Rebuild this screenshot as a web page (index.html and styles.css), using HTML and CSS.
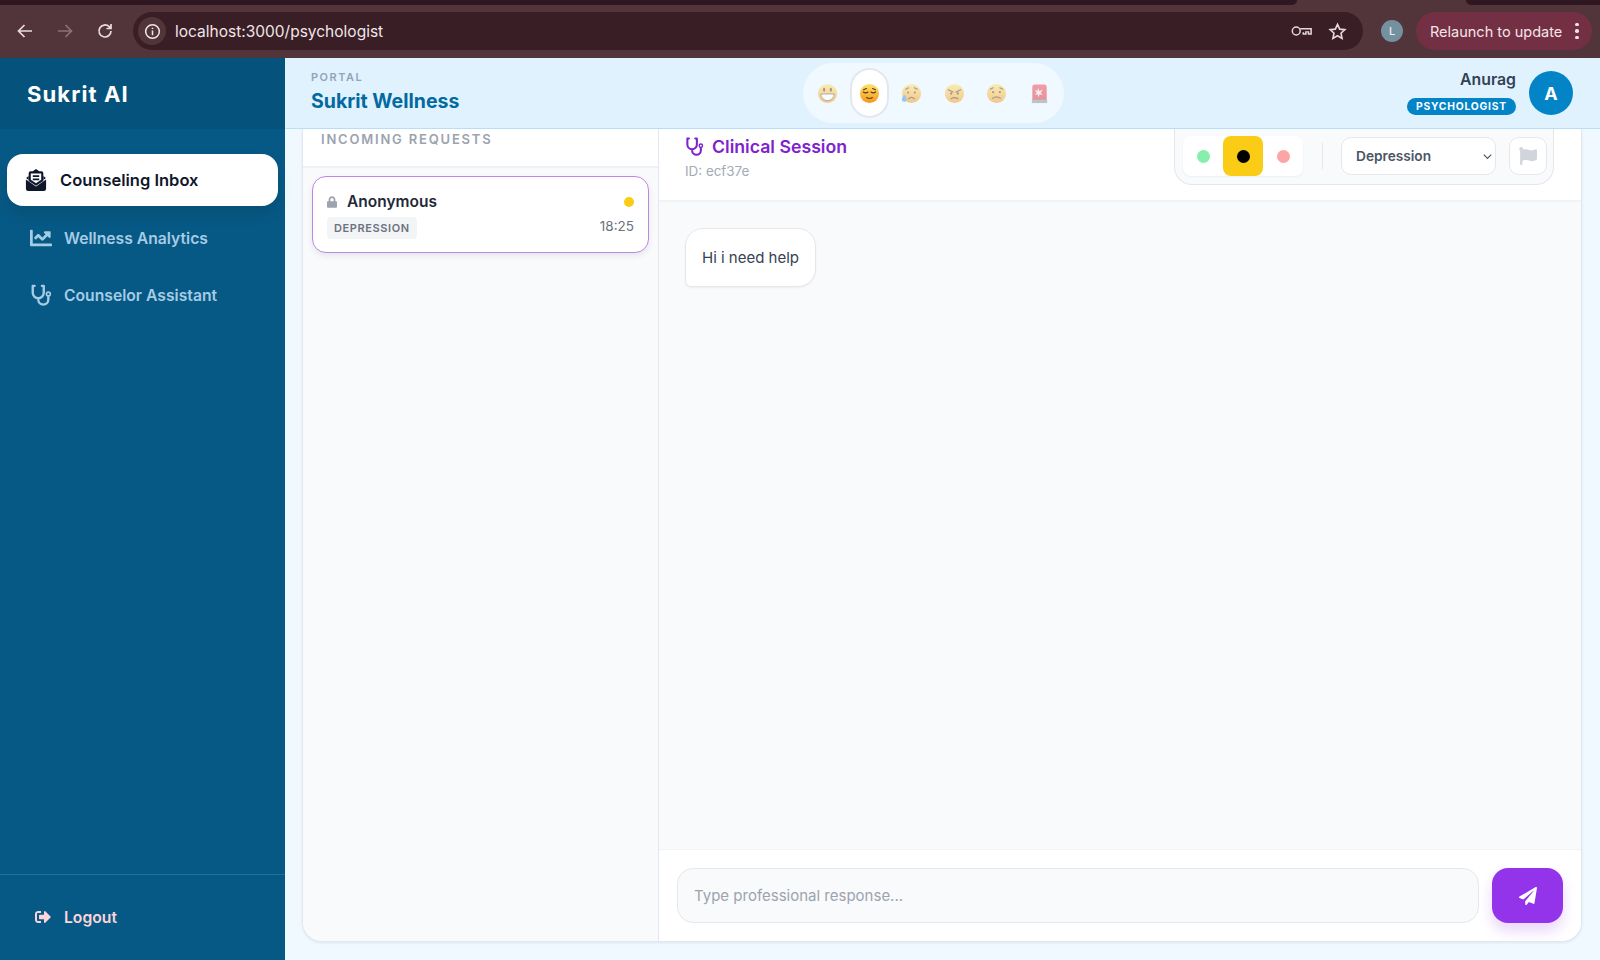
FILE: index.html
```html
<!DOCTYPE html>
<html lang="en">
<head>
    <meta charset="UTF-8">
    <title>Sukrit AI</title>
    <link rel="stylesheet" href="styles.css">
</head>
<body>
    <svg class="defs" width="0" height="0">
        <defs>
            <linearGradient id="face-fill" x1="0" y1="0" x2="0" y2="1">
                <stop offset="0" stop-color="#ffe36b"/>
                <stop offset="1" stop-color="#f59518"/>
            </linearGradient>
            <linearGradient id="alarm-fill" x1="0" y1="0" x2="0" y2="1">
                <stop offset="0" stop-color="#f2434c"/>
                <stop offset="1" stop-color="#d9303a"/>
            </linearGradient>
        </defs>
        <symbol id="i-steth" viewBox="0 0 24 24">
            <path d="M5 2H3v7.500a6 6 0 0 0 12 0V2h-2M9 15.500v1.500a5.500 5.500 0 0 0 11 0v-3.500" fill="none" stroke="currentColor" stroke-width="2.600" stroke-linecap="round" stroke-linejoin="round"/>
            <circle cx="20" cy="11" r="2.100" fill="none" stroke="currentColor" stroke-width="1.800"/>
        </symbol>
        <symbol id="i-lock" viewBox="0 0 448 512">
            <path fill="currentColor" d="M400 224h-24v-72C376 68.200 307.800 0 224 0S72 68.200 72 152v72H48c-26.500 0-48 21.500-48 48v192c0 26.500 21.500 48 48 48h352c26.500 0 48-21.500 48-48V272c0-26.500-21.500-48-48-48zm-104 0H152v-72c0-39.700 32.300-72 72-72s72 32.300 72 72v72z"/>
        </symbol>
    </svg>

    <div class="browser-bar">
        <div class="tab-strip">
            <span class="tab-left"></span>
            <span class="tab-right"></span>
        </div>
        <div class="toolbar">
            <svg class="tb-icon" viewBox="0 0 20 20"><path d="M17 10H4M9.500 4l-6 6 6 6" /></svg>
            <svg class="tb-icon dim" viewBox="0 0 20 20"><path d="M3 10h13M10.500 4l6 6-6 6" /></svg>
            <svg class="tb-icon" viewBox="0 0 20 20"><path d="M16 10a6 6 0 1 1-1.800-4.300L16 7.500M16 3v4.500h-4.500" /></svg>
            <div class="url-pill">
                <span class="site-info"><svg viewBox="0 0 20 20"><circle cx="10" cy="10" r="7.200"/><path d="M10 9v5M10 6v1.400"/></svg></span>
                <span class="url-text">localhost:3000/psychologist</span>
                <svg class="url-icon key" viewBox="0 0 24 16"><circle cx="6" cy="8" r="4.500"/><path d="M10.500 5.500h12.500v6h-3v-2.500h-3v2.500h-3v-2"/></svg>
                <svg class="url-icon star" viewBox="0 0 20 20"><path d="M10 2.500l2.300 5 5.400.6-4 3.700 1.100 5.400L10 14.500l-4.800 2.700 1.100-5.400-4-3.700 5.400-.6z"/></svg>
            </div>
            <span class="profile-dot">L</span>
            <div class="relaunch">
                <span>Relaunch to update</span>
                <span class="kebab"><i></i><i></i><i></i></span>
            </div>
        </div>
    </div>

    <div class="app">
        <aside class="sidebar">
            <div class="brand">Sukrit AI</div>
            <nav class="nav">
                <a class="nav-item active">
                    <svg class="nav-icon envelope" viewBox="0 0 24 24">
                        <path fill="currentColor" d="M1 11.500l11 7.500 11-7.500v10a2.500 2.500 0 0 1-2.500 2.500h-17A2.500 2.500 0 0 1 1 21.500z"/>
                        <path fill="currentColor" d="M4 7.500L1.200 9.800 4 12zM20 7.500l2.800 2.300L20 12z"/>
                        <path fill="currentColor" d="M12 0l3.600 2.500H18a2 2 0 0 1 2 2V13l-8 5.200L4 13V4.500a2 2 0 0 1 2-2h2.400z"/>
                        <path fill="#fff" d="M6.300 4.800h11.400v7l-5.700 3.700-5.700-3.700z"/>
                        <path fill="none" stroke="currentColor" stroke-width="1.900" d="M8.500 7.700h7M8.500 11.200h7"/>
                    </svg>
                    <span>Counseling Inbox</span>
                </a>
                <a class="nav-item">
                    <svg class="nav-icon" viewBox="0 0 512 512"><path fill="currentColor" d="M496 384H64V80c0-8.840-7.160-16-16-16H16C7.160 64 0 71.160 0 80v336c0 17.670 14.330 32 32 32h464c8.840 0 16-7.160 16-16v-32c0-8.840-7.160-16-16-16zM464 96H345.940c-21.380 0-32.090 25.850-16.970 40.970l32.400 32.400L288 242.750l-73.370-73.370c-12.500-12.500-32.760-12.500-45.250 0l-68.690 68.690c-6.250 6.250-6.250 16.380 0 22.630l22.620 22.620c6.250 6.250 16.380 6.250 22.630 0L192 237.250l73.370 73.370c12.500 12.500 32.760 12.500 45.250 0l96-96 32.400 32.400c15.120 15.120 40.970 4.410 40.970-16.970V112c.01-8.840-7.150-16-15.990-16z"/></svg>
                    <span>Wellness Analytics</span>
                </a>
                <a class="nav-item">
                    <svg class="nav-icon"><use href="#i-steth"/></svg>
                    <span>Counselor Assistant</span>
                </a>
            </nav>
            <div class="sidebar-foot">
                <a class="logout">
                    <svg class="logout-icon" viewBox="0 0 512 512"><path fill="currentColor" d="M497 273L329 441c-15 15-41 4.500-41-17v-96H152c-13.300 0-24-10.700-24-24v-96c0-13.300 10.700-24 24-24h136V88c0-21.400 25.900-32 41-17l168 168c9.300 9.400 9.300 24.600 0 34zM192 436v-40c0-6.600-5.400-12-12-12H96c-17.700 0-32-14.300-32-32V160c0-17.700 14.300-32 32-32h84c6.600 0 12-5.400 12-12V76c0-6.600-5.400-12-12-12H96c-53 0-96 43-96 96v192c0 53 43 96 96 96h84c6.600 0 12-5.400 12-12z"/></svg>
                    <span>Logout</span>
                </a>
            </div>
        </aside>

        <div class="main">
            <header class="topbar">
                <div class="portal">
                    <div class="portal-label">PORTAL</div>
                    <div class="portal-name">Sukrit Wellness</div>
                </div>

                <div class="mood-pill">
                    <button class="mood">
                        <svg viewBox="0 0 24 24"><circle class="face" cx="12" cy="12" r="10"/><ellipse cx="8.500" cy="8" rx="1.200" ry="2.100" fill="#5b3a1a"/><ellipse cx="15.500" cy="8" rx="1.200" ry="2.100" fill="#5b3a1a"/><path d="M5 12.500h14a7 7 0 0 1-14 0z" fill="#fff" stroke="#5b3a1a" stroke-width=".8"/></svg>
                    </button>
                    <button class="mood selected">
                        <svg viewBox="0 0 24 24"><circle class="face" cx="12" cy="12" r="10"/><path d="M5.500 10.500q2.500 1.800 5 0M13.500 10.500q2.500 1.800 5 0M9 16.200q3 2 6 0M5.800 8l3-1.200M18.200 8l-3-1.200" class="line"/></svg>
                    </button>
                    <button class="mood">
                        <svg viewBox="0 0 24 24"><circle class="face" cx="12" cy="12" r="10"/><circle cx="8.500" cy="11" r="1.100" fill="#5b3a1a"/><circle cx="15.500" cy="11" r="1.100" fill="#5b3a1a"/><path d="M9 17.500q3-3 6 0M6 7.500l3-1.500M18 7.500l-3-1.500" class="line"/><path d="M4.500 13q3 4 2.500 6.200a2.800 2.800 0 0 1-5 0q-.5-2.200 2.500-6.200z" fill="#3f97e8"/></svg>
                    </button>
                    <button class="mood">
                        <svg viewBox="0 0 24 24"><circle class="face" cx="12" cy="12" r="10"/><circle cx="8.500" cy="12" r="1.200" fill="#5b3a1a"/><circle cx="15.500" cy="12" r="1.200" fill="#5b3a1a"/><path d="M5.500 8l5 2.500M18.500 8l-5 2.500M8.500 17.500q3.500-2.500 7 0" class="line"/></svg>
                    </button>
                    <button class="mood">
                        <svg viewBox="0 0 24 24"><circle class="face" cx="12" cy="12" r="10"/><circle cx="8.500" cy="10.500" r="1.200" fill="#5b3a1a"/><circle cx="15.500" cy="10.500" r="1.200" fill="#5b3a1a"/><path d="M8 17q4-3 8 0M5.500 7.500l3-1.500M18.500 7.500l-3-1.500" class="line"/></svg>
                    </button>
                    <button class="mood">
                        <svg viewBox="0 0 24 24"><path d="M4.500 19V5a2.500 2.500 0 0 1 2.500-2.500h10A2.500 2.500 0 0 1 19.500 5v14z" fill="url(#alarm-fill)"/><path d="M4 18.500h16V22H4z" fill="#8d8f96"/><path d="M10.500 6l1.300 3.500 3.700-1.300-2.300 3 2.300 2.300-3.400-.6-1 3-1-3-3.100.6 2.200-2.300-2.200-3 3 1.300z" fill="#ffe3e5"/></svg>
                    </button>
                </div>

                <div class="user">
                    <div class="user-text">
                        <div class="user-name">Anurag</div>
                        <div class="role-badge">PSYCHOLOGIST</div>
                    </div>
                    <div class="avatar">A</div>
                </div>
            </header>

            <div class="content">
                <div class="panel">
                    <section class="requests">
                        <div class="requests-head">INCOMING REQUESTS</div>
                        <div class="requests-list">
                            <div class="request-card">
                                <div class="request-row">
                                    <div class="request-who">
                                        <svg class="lock"><use href="#i-lock"/></svg>
                                        <span>Anonymous</span>
                                    </div>
                                    <span class="risk-dot"></span>
                                </div>
                                <div class="request-row lower">
                                    <span class="tag">DEPRESSION</span>
                                    <span class="time">18:25</span>
                                </div>
                            </div>
                        </div>
                    </section>

                    <section class="session">
                        <div class="session-head">
                            <div class="session-title">
                                <div class="title-line">
                                    <svg class="title-icon"><use href="#i-steth"/></svg>
                                    <span>Clinical Session</span>
                                </div>
                                <div class="session-id">ID: ecf37e</div>
                            </div>
                            <div class="session-tools">
                                <div class="risk-group">
                                    <button class="risk"><i class="green"></i></button>
                                    <button class="risk on"><i class="black"></i></button>
                                    <button class="risk"><i class="red"></i></button>
                                </div>
                                <span class="tool-sep"></span>
                                <div class="category">
                                    <span>Depression</span>
                                    <svg viewBox="0 0 12 12"><path d="M2 4l4 4 4-4"/></svg>
                                </div>
                                <button class="flag-btn">
                                    <svg viewBox="0 0 512 512"><path fill="currentColor" d="M349.565 98.783C295.978 98.783 251.721 64 184.348 64c-24.955 0-47.309 4.384-68.045 12.013a55.947 55.947 0 0 0 3.586-23.562C118.117 24.015 94.806 1.206 66.338.048 34.345-1.254 8 24.296 8 56c0 19.026 9.497 35.825 24 45.945V488c0 13.255 10.745 24 24 24h16c13.255 0 24-10.745 24-24v-94.400c28.311-12.064 63.582-22.122 114.435-22.122 53.588 0 97.844 34.783 165.217 34.783 48.169 0 86.667-16.294 122.505-40.858C506.840 359.452 512 349.571 512 339.045v-243.100c0-23.393-24.269-38.870-45.485-29.016-34.338 15.948-76.454 31.854-116.950 31.854z"/></svg>
                                </button>
                            </div>
                        </div>

                        <div class="messages">
                            <div class="bubble">Hi i need help</div>
                        </div>

                        <div class="composer">
                            <div class="composer-input">Type professional response...</div>
                            <button class="send">
                                <svg viewBox="0 0 512 512"><path fill="currentColor" d="M476 3.200L12.500 270.600c-18.100 10.400-15.800 35.600 2.200 43.200L121 358.400l287.300-253.200c5.500-4.900 13.300 2.600 8.600 8.300L176 407v80.500c0 23.600 28.500 32.900 42.500 15.800L282 426l124.600 52.200c14.200 6 30.400-2.900 33-18.200l72-432C515 7.800 493.300-6.800 476 3.200z"/></svg>
                            </button>
                        </div>
                    </section>
                </div>
            </div>
        </div>
    </div>
</body>
</html>
```

FILE: styles.css
```css
* {
    margin: 0;
    padding: 0;
    box-sizing: border-box;
}

html, body {
    height: 100%;
    overflow: hidden;
}

body {
    font-family: 'Inter', 'Liberation Sans', sans-serif;
    background: #f0f9ff;
    display: flex;
    flex-direction: column;
}

button {
    border: none;
    background: none;
    font-family: inherit;
}

.defs {
    position: absolute;
}

/* browser chrome */
.browser-bar {
    height: 58px;
    flex-shrink: 0;
    background: #52343b;
    display: flex;
    flex-direction: column;
}

.tab-strip {
    height: 5px;
    display: flex;
    justify-content: space-between;
}

.tab-left,
.tab-right {
    background: #2e1720;
}

.tab-left {
    width: 1297px;
    border-radius: 0 0 8px 0;
}

.tab-right {
    width: 134px;
    border-radius: 0 0 0 8px;
}

.toolbar {
    flex: 1;
    display: flex;
    align-items: center;
    padding: 0 7px 1px 15px;
}

.tb-icon {
    width: 20px;
    height: 20px;
    margin-right: 20px;
    fill: none;
    stroke: #e9dcdf;
    stroke-width: 1.700;
}

.tb-icon.dim {
    stroke: #8c7277;
}

.url-pill {
    height: 38px;
    width: 1230px;
    margin-left: -2px;
    background: #3a1e25;
    border-radius: 19px;
    display: flex;
    align-items: center;
    padding: 0 16px 0 5px;
    color: #f0e6e8;
}

.site-info {
    width: 28px;
    height: 28px;
    border-radius: 50%;
    background: #52343b;
    display: flex;
    align-items: center;
    justify-content: center;
}

.site-info svg {
    width: 19px;
    height: 19px;
    fill: none;
    stroke: #f0e6e8;
    stroke-width: 1.600;
}

.url-text {
    font-size: 15.500px;
    margin-left: 9px;
    flex: 1;
}

.url-icon {
    fill: none;
    stroke: #e6d8db;
    stroke-width: 1.700;
}

.url-icon.key {
    width: 21px;
    height: 14px;
    margin-right: 16px;
}

.url-icon.star {
    width: 19px;
    height: 19px;
}

.profile-dot {
    width: 22px;
    height: 22px;
    margin-left: 18px;
    border-radius: 50%;
    background: #75909f;
    color: #e8eef2;
    font-size: 11px;
    font-weight: 500;
    display: flex;
    align-items: center;
    justify-content: center;
}

.relaunch {
    width: 176px;
    height: 38px;
    margin-left: 13px;
    padding-left: 14px;
    background: #733044;
    border-radius: 19px;
    color: #f6e4e8;
    font-size: 14.500px;
    display: flex;
    align-items: center;
    justify-content: space-between;
}

.kebab {
    width: 14px;
    margin-right: 8px;
    display: flex;
    flex-direction: column;
    align-items: center;
    gap: 3px;
}

.kebab i {
    width: 3.500px;
    height: 3.500px;
    border-radius: 50%;
    background: #f6e4e8;
}

/* app */
.app {
    flex: 1;
    display: flex;
    min-height: 0;
}

.sidebar {
    width: 285px;
    flex-shrink: 0;
    background: #075985;
    display: flex;
    flex-direction: column;
}

.brand {
    height: 71px;
    padding-left: 27px;
    background: #05527c;
    color: #fff;
    font-size: 22px;
    font-weight: 700;
    letter-spacing: 1.100px;
    display: flex;
    align-items: center;
}

.nav {
    flex: 1;
    padding: 25px 7px 0;
    display: flex;
    flex-direction: column;
    gap: 6px;
}

.nav-item {
    height: 52px;
    padding-left: 23px;
    border-radius: 16px;
    color: #a5cce4;
    font-size: 15.700px;
    font-weight: 600;
    display: flex;
    align-items: center;
}

.nav-item + .nav-item + .nav-item {
    margin-top: -1px;
}

.nav-item.active {
    background: #fff;
    color: #0f172a;
    font-size: 16.500px;
    padding-left: 18px;
    box-shadow: 0 8px 14px rgba(0, 0, 0, 0.1);
}

.nav-icon {
    width: 22px;
    height: 22px;
    margin-right: 12px;
}

.nav-item.active .nav-icon {
    margin-right: 13px;
}

.sidebar-foot {
    height: 86px;
    border-top: 1px solid #20709a;
    padding: 24px 0 0 35px;
}

.logout {
    height: 36px;
    color: #fbd5d9;
    font-size: 15.700px;
    font-weight: 600;
    display: flex;
    align-items: center;
}

.logout-icon {
    width: 16px;
    height: 16px;
    margin-right: 13px;
}

.main {
    flex: 1;
    min-width: 0;
    display: flex;
    flex-direction: column;
}

.topbar {
    height: 71px;
    flex-shrink: 0;
    background: #e0f2fe;
    border-bottom: 1px solid #bae0f7;
    display: flex;
    justify-content: space-between;
    align-items: center;
    padding: 0 27px 0 26px;
}

.portal {
    margin-top: -3px;
}

.portal-label {
    color: #94a3b8;
    font-size: 11px;
    font-weight: 600;
    letter-spacing: 1.500px;
    margin-bottom: 5px;
}

.portal-name {
    color: #0369a1;
    font-size: 19.500px;
    font-weight: 700;
}

.mood-pill {
    height: 60px;
    padding: 5px;
    background: rgba(255, 255, 255, 0.5);
    border-radius: 30px;
    display: flex;
    gap: 3.400px;
}

.mood {
    width: 39px;
    height: 50px;
    border-radius: 20px;
    border: 2px solid transparent;
    opacity: 0.5;
    display: flex;
    align-items: center;
    justify-content: center;
}

.mood svg {
    width: 23px;
    height: 23px;
    flex-shrink: 0;
}

.mood.selected {
    opacity: 1;
    background: #fff;
    border-color: #e2e8f0;
}

.face {
    fill: url(#face-fill);
}

.line {
    fill: none;
    stroke: #5b3a1a;
    stroke-width: 1.200;
    stroke-linecap: round;
}

.user {
    display: flex;
    align-items: center;
    gap: 13px;
}

.user-text {
    display: flex;
    flex-direction: column;
    align-items: flex-end;
    gap: 9px;
}

.user-name {
    color: #334155;
    font-size: 15.800px;
    font-weight: 600;
    line-height: 18px;
}

.role-badge {
    height: 17px;
    padding: 0 9px;
    border-radius: 9px;
    background: #0284c7;
    color: #fff;
    font-size: 10.300px;
    font-weight: 700;
    letter-spacing: 0.8px;
    line-height: 17px;
}

.avatar {
    width: 44px;
    height: 44px;
    border-radius: 50%;
    background: #0284c7;
    color: #fff;
    font-size: 18px;
    font-weight: 700;
    display: flex;
    align-items: center;
    justify-content: center;
}

.content {
    flex: 1;
    min-height: 0;
    padding: 0 18px 18px 17px;
}

.panel {
    height: 100%;
    background: #fff;
    border: 1px solid #e2e8f0;
    border-top: none;
    border-radius: 0 0 20px 20px;
    box-shadow: 0 1px 3px rgba(0, 0, 0, 0.08);
    overflow: hidden;
    display: flex;
}

.requests {
    width: 356px;
    flex-shrink: 0;
    border-right: 1px solid #e2e8f0;
    background: #f8fafc;
    display: flex;
    flex-direction: column;
}

.requests-head {
    height: 39px;
    padding: 2px 0 0 18px;
    background: #fff;
    border-bottom: 2px solid #eef1f5;
    color: #9ca3af;
    font-size: 13px;
    font-weight: 600;
    letter-spacing: 1.800px;
}

.requests-list {
    padding: 8px 9px;
}

.request-card {
    height: 77px;
    padding: 15px 14px 0;
    background: #fff;
    border: 1px solid #c084e8;
    border-radius: 14px;
    box-shadow: 0 3px 6px rgba(0, 0, 0, 0.08);
}

.request-row {
    display: flex;
    justify-content: space-between;
    align-items: center;
}

.request-row.lower {
    margin-top: 6px;
}

.request-who {
    display: flex;
    align-items: center;
    gap: 10px;
    color: #1f2937;
    font-size: 15.500px;
    font-weight: 600;
}

.lock {
    width: 10px;
    height: 12px;
    color: #9ca3af;
}

.risk-dot {
    width: 10px;
    height: 10px;
    border-radius: 50%;
    background: #facc15;
}

.tag {
    padding: 0 7px;
    height: 22px;
    line-height: 22px;
    border-radius: 4px;
    background: #f3f4f6;
    color: #6b7280;
    font-size: 11px;
    font-weight: 600;
    letter-spacing: 0.6px;
}

.time {
    color: #6b7280;
    font-size: 13.500px;
    margin-top: -4px;
}

.session {
    flex: 1;
    min-width: 0;
    display: flex;
    flex-direction: column;
}

.session-head {
    height: 73px;
    flex-shrink: 0;
    padding: 0 27px 0 26px;
    border-bottom: 2px solid #f1f3f6;
    display: flex;
    justify-content: space-between;
    align-items: flex-start;
}

.session-title {
    padding-top: 7px;
}

.title-line {
    display: flex;
    align-items: center;
    gap: 8px;
    color: #7e22ce;
    font-size: 17.700px;
    font-weight: 600;
}

.title-icon {
    width: 19px;
    height: 19px;
}

.session-id {
    margin-top: 6px;
    color: #a3aab5;
    font-size: 13.400px;
}

.session-tools {
    height: 56px;
    padding: 7px 6px 8px 8px;
    background: #f8fafc;
    border: 1px solid #e5e7eb;
    border-top: none;
    border-radius: 0 0 18px 18px;
    display: flex;
    align-items: center;
}

.risk-group {
    height: 40px;
    background: #fff;
    border-radius: 8px;
    box-shadow: 0 1px 2px rgba(0, 0, 0, 0.05);
    display: flex;
}

.risk {
    width: 40px;
    height: 40px;
    border-radius: 8px;
    display: flex;
    align-items: center;
    justify-content: center;
}

.risk.on {
    background: #facc15;
}

.risk i {
    width: 13px;
    height: 13px;
    border-radius: 50%;
}

.risk .green { background: #86efac; }
.risk .black { background: #000; }
.risk .red { background: #fca5a5; }

.tool-sep {
    width: 1px;
    height: 26px;
    margin: 0 18px 0 19px;
    background: #e2e8f0;
}

.category {
    width: 155px;
    height: 38px;
    padding: 0 2px 0 14px;
    background: #fff;
    border: 1px solid #e5e7eb;
    border-radius: 10px;
    color: #4b5563;
    font-size: 13.700px;
    font-weight: 600;
    display: flex;
    align-items: center;
    justify-content: space-between;
}

.category svg {
    width: 11px;
    height: 11px;
    fill: none;
    stroke: #4b5563;
    stroke-width: 1.300;
}

.flag-btn {
    width: 38px;
    height: 38px;
    margin-left: 13px;
    background: #fff;
    border: 1px solid #e5e7eb;
    border-radius: 10px;
    color: #d1d5db;
    display: flex;
    align-items: center;
    justify-content: center;
}

.flag-btn svg {
    width: 18px;
    height: 18px;
}

.messages {
    flex: 1;
    min-height: 0;
    padding: 26px 26px;
    background: #f8fafc;
}

.bubble {
    width: fit-content;
    padding: 20px 16px 19px;
    background: #fff;
    border: 1px solid #e5e7eb;
    border-radius: 18px 18px 18px 6px;
    box-shadow: 0 1px 2px rgba(0, 0, 0, 0.05);
    color: #374151;
    font-size: 15px;
    line-height: 18px;
}

.composer {
    height: 92px;
    flex-shrink: 0;
    padding: 18px 18px 0;
    background: #fff;
    border-top: 1px solid #f1f3f6;
    display: flex;
    gap: 13px;
}

.composer-input {
    flex: 1;
    height: 55px;
    padding-left: 16px;
    background: #f9fafb;
    border: 1px solid #e5e7eb;
    border-radius: 16px;
    color: #9ca3af;
    font-size: 15px;
    display: flex;
    align-items: center;
}

.send {
    width: 71px;
    height: 55px;
    border-radius: 16px;
    background: #9333ea;
    color: #fff;
    box-shadow: 0 8px 14px rgba(147, 51, 234, 0.2);
    display: flex;
    align-items: center;
    justify-content: center;
}

.send svg {
    width: 18px;
    height: 18px;
}
```
